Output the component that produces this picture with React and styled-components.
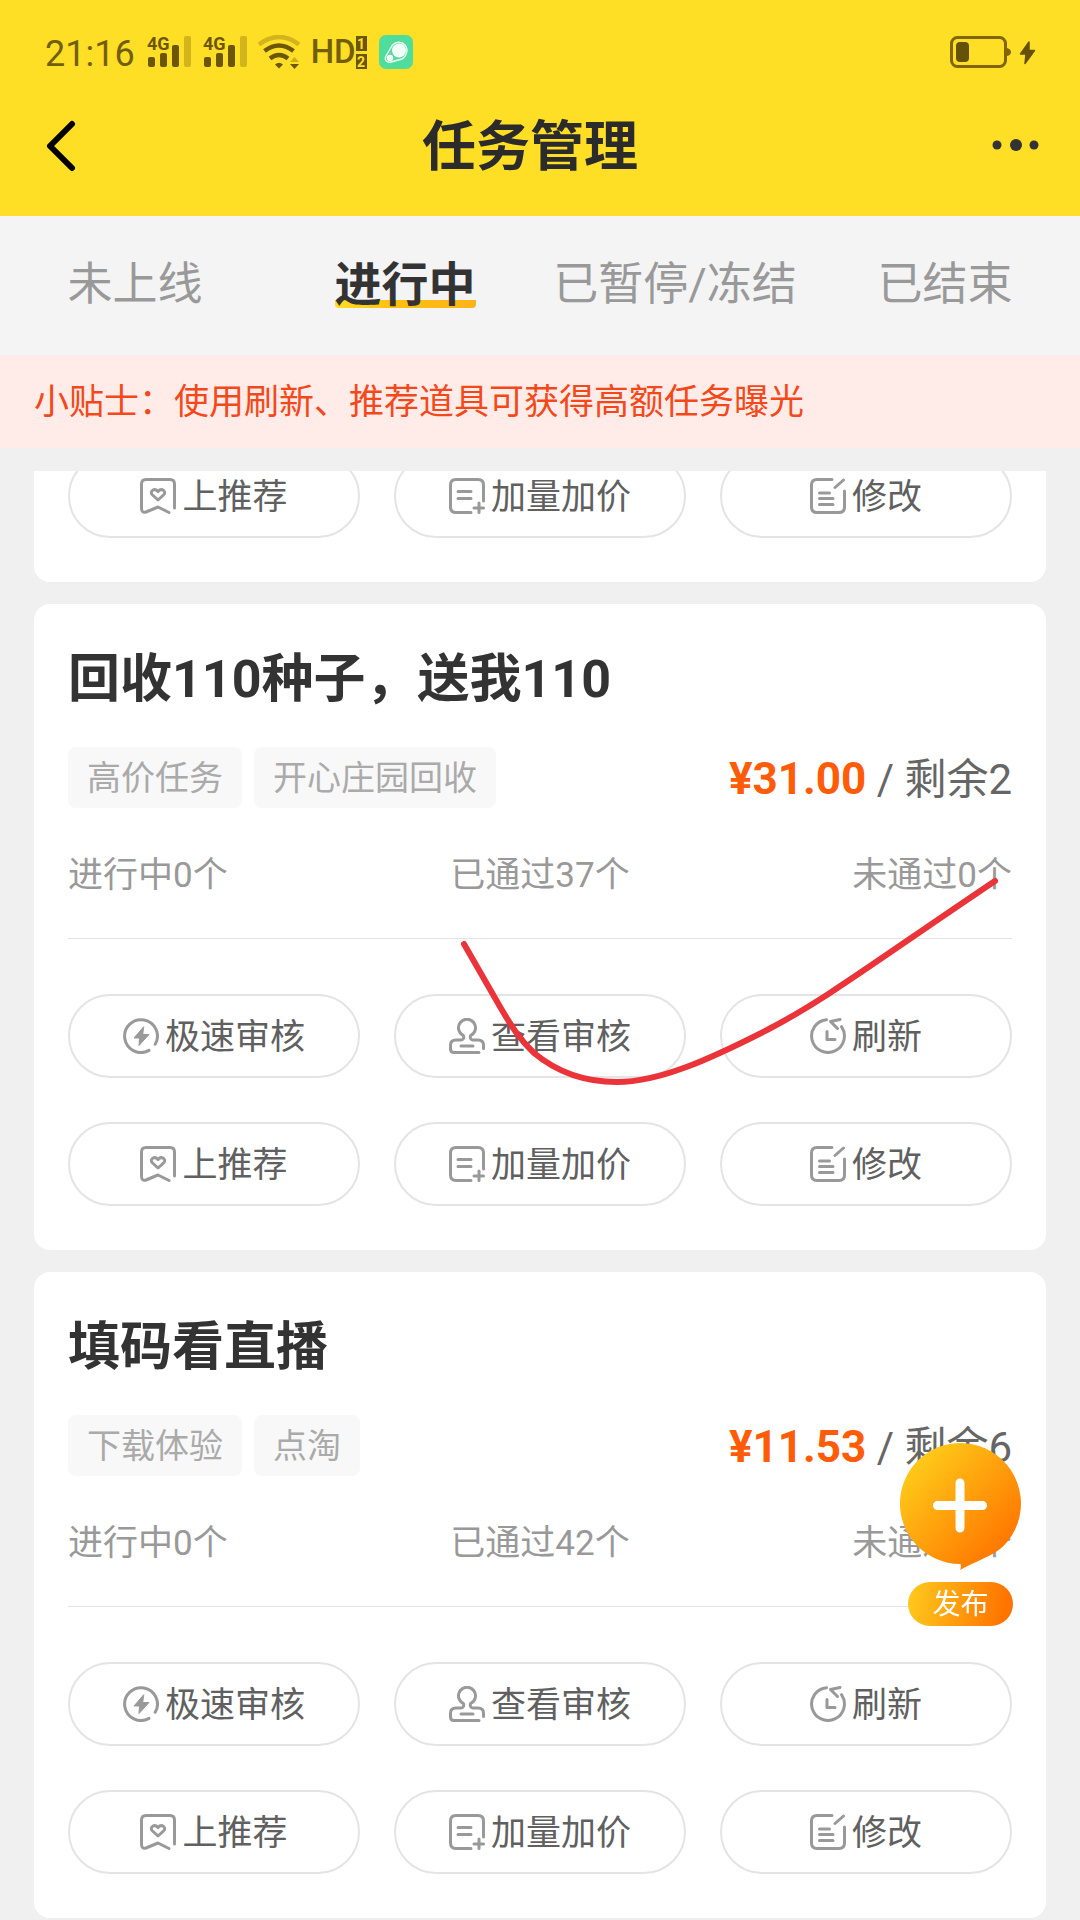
import React, { useState } from "react";
import styled, { createGlobalStyle } from "styled-components";

const GlobalStyle = createGlobalStyle`
  * {
    box-sizing: border-box;
  }
  body {
    margin: 0;
    background-color: #f0f0f0;
    font-family: Roboto, "Noto Sans CJK SC", sans-serif;
  }
  h1, h2, p, ul {
    margin: 0;
    padding: 0;
  }
  button {
    padding: 0;
    border: 0;
    background: none;
    font-family: inherit;
    cursor: pointer;
  }
  svg {
    display: block;
    flex: none;
  }
`;

const Page = styled.div`
  display: flex;
  flex-direction: column;
  height: 100vh;
`;

const Header = styled.header`
  padding-bottom: 28px;
  background-color: #ffde26;
`;

const StatusBar = styled.div`
  display: flex;
  align-items: center;
  justify-content: space-between;
  height: 104px;
  padding: 0 44px 0 45px;
  color: #735e08;
  .group {
    display: flex;
    align-items: center;
    gap: 10px;
  }
  time {
    padding-top: 4px;
    font-size: 36px;
    line-height: 40px;
  }
`;

const HdMark = styled.span`
  display: flex;
  align-items: center;
  font-size: 33px;
  font-weight: 500;
  line-height: 36px;
  .sims {
    display: flex;
    flex-direction: column;
    gap: 3px;
  }
  .sims span {
    width: 11px;
    height: 15px;
    background-color: #6b5608;
    color: #ffde26;
    font-size: 14px;
    font-weight: 700;
    line-height: 16px;
    text-align: center;
  }
`;

const NavBar = styled.div`
  display: flex;
  align-items: center;
  justify-content: space-between;
  height: 84px;
  padding: 0 40px 0 44px;
  h1 {
    padding-top: 4px;
    color: #2b2b2b;
    font-size: 54px;
    font-weight: 700;
    line-height: 80px;
  }
`;

const Tabs = styled.nav`
  display: grid;
  grid-template-columns: repeat(4, 1fr);
  justify-items: center;
  align-items: center;
  height: 139px;
  padding-bottom: 2px;
  background-color: #f4f4f4;
`;

const Tab = styled.button`
  color: ${(props) => (props.$active ? "#333" : "#999")};
  font-size: ${(props) => (props.$active ? 47 : 45)}px;
  font-weight: ${(props) => (props.$active ? 700 : 400)};
  line-height: 46px;
  white-space: nowrap;
  span {
    display: block;
    border-radius: 4px;
    background: ${(props) =>
      props.$active
        ? "linear-gradient(90deg, #ffdd26, #fdc010 40%, #fdb31a) 0 100% / 100% 8px no-repeat"
        : "none"};
  }
`;

const Tip = styled.p`
  padding: 22px 34px 19px;
  background-color: #ffece8;
  color: #f4481a;
  font-size: 35px;
  line-height: 52px;
`;

const List = styled.main`
  flex: 1;
  min-height: 0;
  margin-top: 23px;
  padding: 0 34px;
  overflow-y: auto;
  scrollbar-width: none;
`;

const Card = styled.article`
  position: relative;
  margin-bottom: 22px;
  padding: 46px 34px 44px;
  border-radius: 16px;
  background-color: #fff;
  h2 {
    color: #333;
    font-size: 52px;
    font-weight: 700;
    line-height: 60px;
  }
`;

/* the previous task, mostly scrolled out of the list */
const ScrolledCard = styled(Card)`
  margin-top: -17px;
  padding-top: 0;
  border-radius: 0 0 16px 16px;
`;

const Meta = styled.div`
  display: flex;
  align-items: center;
  justify-content: space-between;
  margin-top: 37px;
  .tags {
    display: flex;
    gap: 12px;
    list-style: none;
  }
`;

const Tag = styled.li`
  padding: 2px 19px 0;
  border-radius: 8px;
  background-color: #f8f8f8;
  color: #aaa;
  font-size: 34px;
  line-height: 59px;
`;

const Price = styled.p`
  padding-top: 4px;
  color: #666;
  font-size: 42px;
  line-height: 56px;
  white-space: nowrap;
  strong {
    color: #ff5c0a;
    font-size: 44px;
    font-weight: 700;
  }
`;

const Stats = styled.div`
  display: flex;
  justify-content: space-between;
  margin-top: 43px;
  padding-bottom: 37px;
  border-bottom: 1px solid #e2e2e2;
  color: #999;
  font-size: 35px;
  line-height: 50px;
`;

const Actions = styled.div`
  display: grid;
  grid-template-columns: repeat(3, 1fr);
  gap: 44px 34px;
  margin-top: ${(props) => (props.$bare ? 0 : 55)}px;
`;

const ActionButton = styled.button`
  display: flex;
  align-items: center;
  justify-content: center;
  gap: 6px;
  height: 84px;
  border: 2px solid #e4e4e4;
  border-radius: 42px;
  color: #606060;
  font-size: 35px;
  line-height: 50px;
  span {
    padding-top: 3px;
  }
`;

const Mark = styled.svg`
  position: absolute;
  top: 0;
  left: 0;
  width: 100%;
  height: 100%;
  pointer-events: none;
`;

const Publish = styled.button`
  position: fixed;
  right: 59px;
  bottom: 294px;
  display: flex;
  flex-direction: column;
  align-items: center;
  gap: 11px;
  span {
    width: 105px;
    padding-top: 2px;
    border-radius: 22px;
    background: linear-gradient(100deg, #ffc61c 5%, #ff7400 90%);
    color: #fff;
    font-size: 28px;
    line-height: 42px;
  }
`;

const SignalIcon = () => (
  <svg width="46" height="48" viewBox="0 -8 46 48" fill="#6b5608" aria-hidden="true">
    <text x="2" y="14" fontSize="18" fontWeight="700" fontFamily="Roboto, sans-serif">
      4G
    </text>
    <rect x="3" y="21" width="7" height="10" rx="2" />
    <rect x="15" y="17" width="7" height="14" rx="2" />
    <rect x="27" y="9" width="7" height="22" rx="2" />
    <rect x="39" y="0" width="7" height="31" rx="2" opacity="0.3" />
  </svg>
);

const WifiIcon = () => (
  <svg width="44" height="34" viewBox="0 0 44 34" fill="none" stroke="#6b5608" aria-hidden="true">
    <path d="M2 9.500Q22-5.500 42 9.500" strokeWidth="4.500" opacity="0.3" />
    <path d="M7.500 16Q22 5 36.500 16" strokeWidth="4.500" />
    <path d="M13 23.500Q22 16.500 31 23.500" strokeWidth="4.500" />
    <path d="M18 29.500Q22 26 26 29.500L22 33.500Z" fill="#6b5608" stroke="none" />
    <path d="M33 27L37.500 22L42 27Z" fill="#6b5608" stroke="none" opacity="0.35" />
    <path d="M33 29L42 29L37.500 34Z" fill="#6b5608" stroke="none" />
  </svg>
);

const AppIcon = () => (
  <svg width="36" height="36" viewBox="2 0 36 36" aria-hidden="true">
    <rect x="4" y="1" width="34" height="34" rx="7" fill="#50dc9c" />
    <path
      d="M17.500 11C21 7 27 7.500 30 11C34 16 31 23 27 25L16 28C12 29 9 26 11 22Z"
      fill="#5bd8a0"
      stroke="#e6fff2"
      strokeWidth="1.400"
    />
    <circle cx="24" cy="16.500" r="7" fill="#f2fff8" />
    <circle cx="15" cy="24" r="3.200" fill="#f2fff8" />
  </svg>
);

const BatteryIcon = () => (
  <svg width="86" height="34" viewBox="0 0 86 34" aria-hidden="true">
    <rect x="1.500" y="2.500" width="54" height="29" rx="6" fill="none" stroke="#806606" strokeWidth="3" />
    <rect x="6" y="7" width="13" height="20" rx="4" fill="#655209" />
    <path d="M57 13Q61 14 61 17Q61 20 57 21Z" fill="#806606" />
    <path
      d="M79 7L70.500 19H76L75 28.500L84.500 15.500H79Z"
      fill="#655209"
      stroke="#655209"
      strokeWidth="1.500"
      strokeLinejoin="round"
    />
  </svg>
);

const iconPaths = {
  fast: (
    <>
      <path d="M26 32.400A16.400 16.400 0 1 1 32.200 26.300" />
      <path d="M20.500 9L11 20H16.500L16 27.500L26 16.500H20Z" fill="#999" strokeWidth="1" />
    </>
  ),
  review: (
    <>
      <path d="M30 34.500H5Q1.500 34.500 1.500 31V27Q1.500 22 7 22H12Q15.500 21.500 14.500 17.500A8.500 8.500 0 1 1 21.500 17.500Q20.500 21.500 24 22H29Q34.500 22 34.500 27V30.500" />
      <path d="M12 28H24" />
    </>
  ),
  refresh: (
    <>
      <path d="M16.500 1.700A16.400 16.400 0 1 0 31.500 8.700" />
      <path d="M30 1.500L20.500 3.500L27.500 10.500" />
      <path d="M17 13.500V21.500H25" />
    </>
  ),
  recommend: (
    <>
      <path d="M34.500 30V6Q34.500 1.500 30 1.500H6Q1.500 1.500 1.500 6V30Q1.500 35.500 6 34L18 29L29 34.500" />
      <path d="M18 22L12 16.500C9.500 13 14.500 9.500 18 13.500C21.500 9.500 26.500 13 24 16.500Z" />
    </>
  ),
  add: (
    <>
      <path d="M22 34.500H7Q1.500 34.500 1.500 29V7Q1.500 1.500 7 1.500H29Q34.500 1.500 34.500 7V23" />
      <path d="M9 13.500H22M9 20.500H22M25 30H34.500M30 25V34.500" />
    </>
  ),
  edit: (
    <>
      <path d="M22 1.500H7Q1.500 1.500 1.500 7V29Q1.500 34.500 7 34.500H29Q34.500 34.500 34.500 29V13" />
      <path d="M33.500 2L25 9.500M9.500 15H19.500M9.500 20.500H23M9.500 26.500H23" />
    </>
  ),
};

const ActionIcon = ({ name }) => (
  <svg
    width="36"
    height="36"
    viewBox="0 0 36 36"
    fill="none"
    stroke="#999"
    strokeWidth="3"
    strokeLinecap="round"
    strokeLinejoin="round"
    aria-hidden="true"
  >
    {iconPaths[name]}
  </svg>
);

const reviewActions = [
  { icon: "fast", label: "极速审核" },
  { icon: "review", label: "查看审核" },
  { icon: "refresh", label: "刷新" },
];

const editActions = [
  { icon: "recommend", label: "上推荐" },
  { icon: "add", label: "加量加价" },
  { icon: "edit", label: "修改" },
];

const tabs = ["未上线", "进行中", "已暂停/冻结", "已结束"];

const tasks = [
  {
    title: "回收110种子，送我110",
    tags: ["高价任务", "开心庄园回收"],
    price: "31.00",
    left: 2,
    passed: 37,
    marked: true,
  },
  {
    title: "填码看直播",
    tags: ["下载体验", "点淘"],
    price: "11.53",
    left: 6,
    passed: 42,
  },
];

const ActionGrid = ({ items, bare }) => (
  <Actions $bare={bare}>
    {items.map((item) => (
      <ActionButton type="button" key={item.label}>
        <ActionIcon name={item.icon} />
        <span>{item.label}</span>
      </ActionButton>
    ))}
  </Actions>
);

const TaskCard = ({ task }) => (
  <Card>
    <h2>{task.title}</h2>
    <Meta>
      <ul className="tags">
        {task.tags.map((tag) => (
          <Tag key={tag}>{tag}</Tag>
        ))}
      </ul>
      <Price>
        <strong>¥{task.price}</strong> / 剩余{task.left}
      </Price>
    </Meta>
    <Stats>
      <span>进行中0个</span>
      <span>已通过{task.passed}个</span>
      <span>未通过0个</span>
    </Stats>
    <ActionGrid items={[...reviewActions, ...editActions]} />
    {task.marked && (
      <Mark viewBox="0 0 1012 646" preserveAspectRatio="none" aria-hidden="true">
        <path
          d="M430 340L461 394C478 424 487 437 500 449C524 469 552 478 583 478C625 478 674 456 733 426C791 396 839 359 961 277"
          fill="none"
          stroke="#ea3439"
          strokeWidth="6"
          strokeLinecap="round"
          strokeLinejoin="round"
        />
      </Mark>
    )}
  </Card>
);

const App = () => {
  const [active, setActive] = useState("进行中");

  return (
    <Page>
      <GlobalStyle />
      <Header>
        <StatusBar>
          <div className="group">
            <time>21:16</time>
            <SignalIcon />
            <SignalIcon />
            <WifiIcon />
            <HdMark>
              HD
              <span className="sims">
                <span>1</span>
                <span>2</span>
              </span>
            </HdMark>
            <AppIcon />
          </div>
          <BatteryIcon />
        </StatusBar>
        <NavBar>
          <button type="button" aria-label="返回">
            <svg width="34" height="52" viewBox="0 0 34 52" fill="none" stroke="#000" strokeWidth="6">
              <path d="M28 4L6 26L28 48" strokeLinecap="round" strokeLinejoin="round" />
            </svg>
          </button>
          <h1>任务管理</h1>
          <button type="button" aria-label="更多">
            <svg width="58" height="20" viewBox="0 0 58 20" fill="#333">
              <circle cx="15" cy="9" r="4.500" />
              <circle cx="34" cy="9" r="6" />
              <circle cx="52" cy="9" r="4.500" />
            </svg>
          </button>
        </NavBar>
      </Header>

      <Tabs>
        {tabs.map((tab) => (
          <Tab type="button" key={tab} $active={tab === active} onClick={() => setActive(tab)}>
            <span>{tab}</span>
          </Tab>
        ))}
      </Tabs>
      <Tip>小贴士：使用刷新、推荐道具可获得高额任务曝光</Tip>

      <List>
        <ScrolledCard>
          <ActionGrid items={editActions} bare />
        </ScrolledCard>
        {tasks.map((task) => (
          <TaskCard key={task.title} task={task} />
        ))}
      </List>

      <Publish type="button">
        <svg width="121" height="128" viewBox="0 0 121 128" aria-hidden="true">
          <defs>
            <linearGradient id="publish" x1="0.1" y1="0.1" x2="0.85" y2="0.85">
              <stop offset="0" stopColor="#ffce1a" />
              <stop offset="1" stopColor="#ff7600" />
            </linearGradient>
          </defs>
          <path
            d="M60.500 121A60.500 60.500 0 1 1 103 103.500C93 113 78 117 60 127Q61.500 124 60.500 121Z"
            fill="url(#publish)"
          />
          <path d="M60 40V85M37.500 62.500H82.500" stroke="#fff" strokeWidth="9" strokeLinecap="round" />
        </svg>
        <span>发布</span>
      </Publish>
    </Page>
  );
};

export default App;
